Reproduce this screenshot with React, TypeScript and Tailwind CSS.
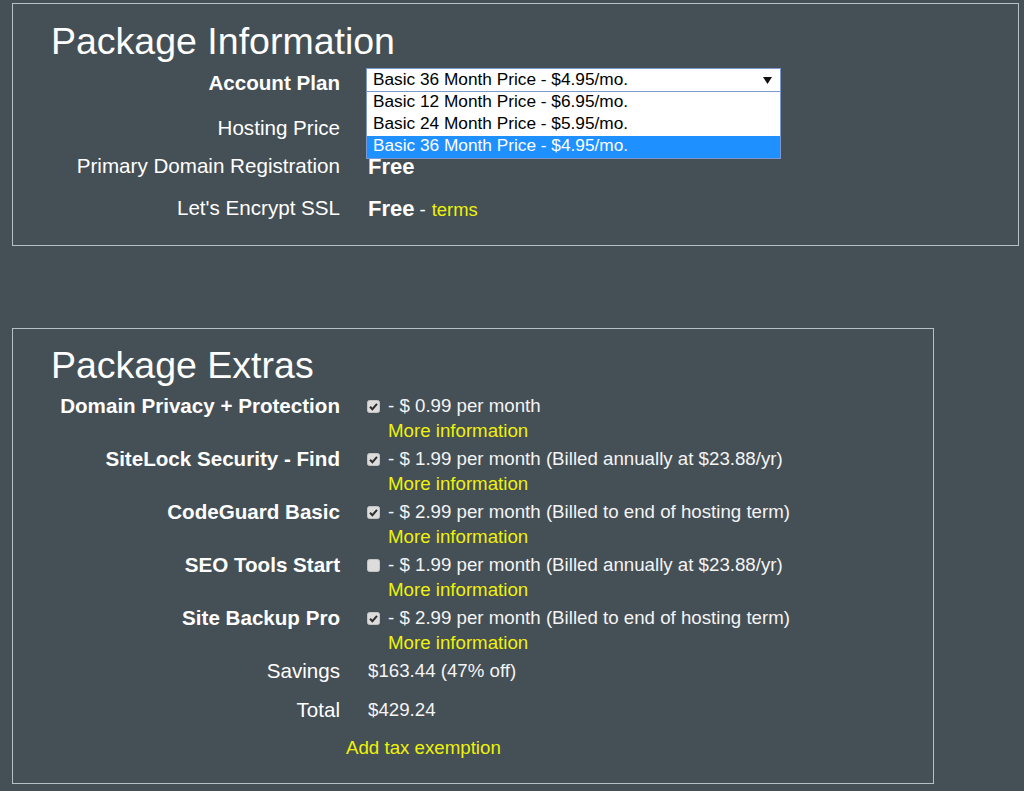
import React from 'react';

const extras = [
  { name: 'Domain Privacy + Protection', price: '- $ 0.99 per month', checked: true },
  { name: 'SiteLock Security - Find', price: '- $ 1.99 per month (Billed annually at $23.88/yr)', checked: true },
  { name: 'CodeGuard Basic', price: '- $ 2.99 per month (Billed to end of hosting term)', checked: true },
  { name: 'SEO Tools Start', price: '- $ 1.99 per month (Billed annually at $23.88/yr)', checked: false },
  { name: 'Site Backup Pro', price: '- $ 2.99 per month (Billed to end of hosting term)', checked: true },
];

const plans = [
  'Basic 12 Month Price - $6.95/mo.',
  'Basic 24 Month Price - $5.95/mo.',
  'Basic 36 Month Price - $4.95/mo.',
];

function Checkbox({ checked }: { checked: boolean }) {
  return (
    <svg width="13" height="13" viewBox="0 0 13 13" className="shrink-0">
      <rect x="0.5" y="0.5" width="12" height="12" rx="2" fill="#dcdcdc" stroke="#c4c4c4" />
      {checked && (
        <path d="M3 6.8 L5.4 9.2 L10 3.8" fill="none" stroke="#2e2e2e" strokeWidth="2" />
      )}
    </svg>
  );
}

function Label({ children, bold }: { children: React.ReactNode; bold?: boolean }) {
  return (
    <div className={`w-[327px] shrink-0 text-right text-[20.6px] text-white ${bold ? 'font-bold' : ''}`}>
      {children}
    </div>
  );
}

export default function App() {
  return (
    <div className="min-h-screen bg-[#454f56] pt-[3px] px-[12px] pb-[8px] font-['Liberation_Sans',Arial,sans-serif] text-white">
      {/* Package Information */}
      <div className="w-[1007px] h-[243px] border border-[#b9c0c5]">
        <h1 className="pl-[38px] pt-[15px] pb-[2px] text-[37.5px] leading-[44px] font-normal">Package Information</h1>

        <div className="mt-[3px] flex h-[30px] items-center">
          <Label bold>Account Plan</Label>
          <div className="relative ml-[26px] self-start z-10">
            <div className="flex h-[24px] w-[415px] items-center justify-between border border-[#7b9bd0] bg-white pl-[6px] pr-[8px] text-[17.25px] text-black">
              <span>{plans[2]}</span>
              <svg width="9" height="7" viewBox="0 0 9 7">
                <path d="M0 0 H9 L4.5 7 Z" fill="#111" />
              </svg>
            </div>
            <div className="absolute left-0 top-full w-[415px] border border-t-0 border-[#7b9bd0] bg-white text-[17.25px] text-black">
              {plans.map((p, i) => (
                <div
                  key={p}
                  className={`h-[22px] pl-[6px] leading-[18px] ${i === 2 ? 'bg-[#1e90ff] text-white' : ''}`}
                >
                  {p}
                </div>
              ))}
            </div>
          </div>
        </div>

        <div className="mt-[15px] flex h-[30px] items-center">
          <Label>Hosting Price</Label>
        </div>

        <div className="mt-[8px] flex h-[30px] items-center">
          <Label>Primary Domain Registration</Label>
          <div className="ml-[28px] text-[22px] font-bold">Free</div>
        </div>

        <div className="mt-[12px] flex h-[30px] items-center">
          <Label>Let's Encrypt SSL</Label>
          <div className="ml-[28px] flex items-baseline">
            <span className="text-[22px] font-bold">Free</span>
            <span className="ml-[5px] text-[18.7px]">-</span>
            <span className="ml-[6px] text-[18.4px] text-[#eef20a]">terms</span>
          </div>
        </div>
      </div>

      {/* Package Extras */}
      <div className="mt-[82px] w-[922px] h-[456px] border border-[#b9c0c5]">
        <h2 className="pl-[38px] pt-[14px] pb-[2px] text-[37.5px] leading-[44px] font-normal">Package Extras</h2>

        <div className="mt-[4px] flex flex-col">
          {extras.map((e) => (
            <div key={e.name} className="flex">
              <Label bold>
                <div className="h-[26px] leading-[26px]">{e.name}</div>
              </Label>
              <div className="ml-[27px] flex flex-col text-[18.7px]">
                <div className="flex h-[26px] items-center">
                  <Checkbox checked={e.checked} />
                  <span className="ml-[8px] text-[#f4f4f4]">{e.price}</span>
                </div>
                <div className="h-[27px] pl-[21px] leading-[24px] text-[#eef20a]">More information</div>
              </div>
            </div>
          ))}

          <div className="flex h-[26px] items-center">
            <Label>Savings</Label>
            <div className="ml-[28px] text-[18.7px] text-[#f4f4f4]">$163.44 (47% off)</div>
          </div>

          <div className="mt-[13px] flex h-[26px] items-center">
            <Label>Total</Label>
            <div className="ml-[28px] text-[18.7px] text-[#f4f4f4]">$429.24</div>
          </div>

          <div className="mt-[12px] flex h-[26px] items-center pl-[333px] text-[18.7px] text-[#eef20a]">
            Add tax exemption
          </div>
        </div>
      </div>
    </div>
  );
}
